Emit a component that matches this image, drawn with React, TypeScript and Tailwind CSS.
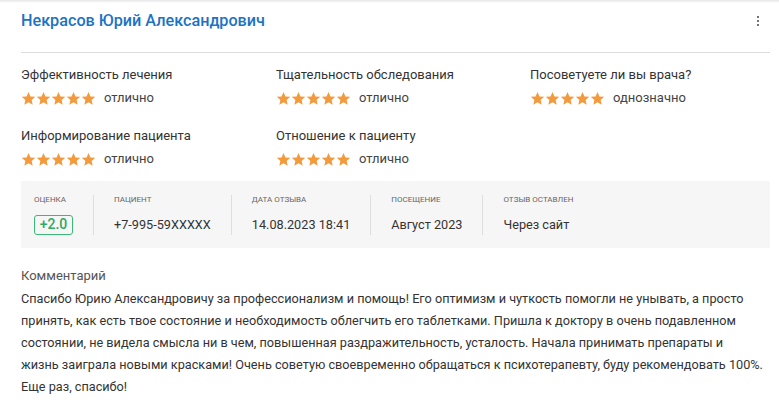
const RATINGS: { label: string; value: string }[] = [
  { label: "Эффективность лечения", value: "отлично" },
  { label: "Тщательность обследования", value: "отлично" },
  { label: "Посоветуете ли вы врача?", value: "однозначно" },
  { label: "Информирование пациента", value: "отлично" },
  { label: "Отношение к пациенту", value: "отлично" },
];

const INFO: { label: string; value: string }[] = [
  { label: "Пациент", value: "+7-995-59XXXXX" },
  { label: "Дата отзыва", value: "14.08.2023 18:41" },
  { label: "Посещение", value: "Август 2023" },
  { label: "Отзыв оставлен", value: "Через сайт" },
];

// lines broken as in the original layout
const COMMENT_LINES = [
  "Спасибо Юрию Александровичу за профессионализм и помощь! Его оптимизм и чуткость помогли не унывать, а просто",
  "принять, как есть твое состояние и необходимость облегчить его таблетками. Пришла к доктору в очень подавленном",
  "состоянии, не видела смысла ни в чем, повышенная раздражительность, усталость. Начала принимать препараты и",
  "жизнь заиграла новыми красками! Очень советую своевременно обращаться к психотерапевту, буду рекомендовать 100%.",
  "Еще раз, спасибо!",
];

function Star() {
  return (
    <svg width="15" height="15" viewBox="0 0 24 24" className="block">
      <path
        fill="#f39a3d"
        d="M12 1.5l3.1 7.1 7.7.7-5.8 5.1 1.7 7.6L12 18l-6.7 4 1.7-7.6L1.2 9.3l7.7-.7z"
      />
    </svg>
  );
}

function Stars() {
  return (
    <div className="flex">
      {[0, 1, 2, 3, 4].map((i) => (
        <Star key={i} />
      ))}
    </div>
  );
}

export default function App() {
  return (
    <div
      className="min-h-[402px] bg-white text-[#333]"
      style={{ fontFamily: "Roboto, 'Noto Sans', sans-serif" }}
    >
      <div className="h-[3px] bg-gradient-to-b from-[#e6e6e6] to-white" />
      <div className="ml-[21px] w-[749px]">
        <div className="flex h-[50px] items-start justify-between border-b border-[#dcdcdc] pt-[7px]">
          <h1 className="text-[16.2px] font-medium leading-[22px] text-[#1a73c4]">
            Некрасов Юрий Александрович
          </h1>
          <button className="mr-[11px] mt-[6px] flex flex-col gap-[2px]">
            <span className="block h-[2px] w-[2px] rounded-full bg-[#444]" />
            <span className="block h-[2px] w-[2px] rounded-full bg-[#444]" />
            <span className="block h-[2px] w-[2px] rounded-full bg-[#444]" />
          </button>
        </div>

        <div className="mt-[12px] grid grid-cols-[255px_254px_1fr] gap-y-[18px]">
          {RATINGS.map((r) => (
            <div key={r.label}>
              <div className="text-[13px] leading-[20px] text-[#333]">{r.label}</div>
              <div className="mt-[3px] flex h-[20px] items-center">
                <Stars />
                <span className="ml-[8px] text-[13px] text-[#444]">{r.value}</span>
              </div>
            </div>
          ))}
        </div>

        <div className="mt-[12px] flex h-[67px] items-center bg-[#f6f6f6] px-[13px]">
          <div className="flex h-[40px] flex-col justify-between pr-[20px]">
            <div className="text-[8px] uppercase leading-[10px] text-[#666]">Оценка</div>
            <div className="flex h-[20px] w-[39px] items-center justify-center rounded-[3px] border border-[#3cb878] text-[14px] font-medium text-[#2fa866]">
              +2.0
            </div>
          </div>
          {INFO.map((item) => (
            <div
              key={item.label}
              className="flex h-[40px] flex-col justify-between border-l border-[#dedede] px-[20px]"
            >
              <div className="text-[8px] uppercase leading-[10px] text-[#666]">{item.label}</div>
              <div className="text-[12.7px] leading-[20px] text-[#333]">{item.value}</div>
            </div>
          ))}
        </div>

        <div className="mt-[18px] text-[13px] leading-[20px] text-[#555]">Комментарий</div>
        <p className="mt-[2px] text-[12.7px] leading-[22px] text-[#333]">
          {COMMENT_LINES.map((line) => (
            <span key={line} className="block whitespace-nowrap">
              {line}
            </span>
          ))}
        </p>
      </div>
    </div>
  );
}
